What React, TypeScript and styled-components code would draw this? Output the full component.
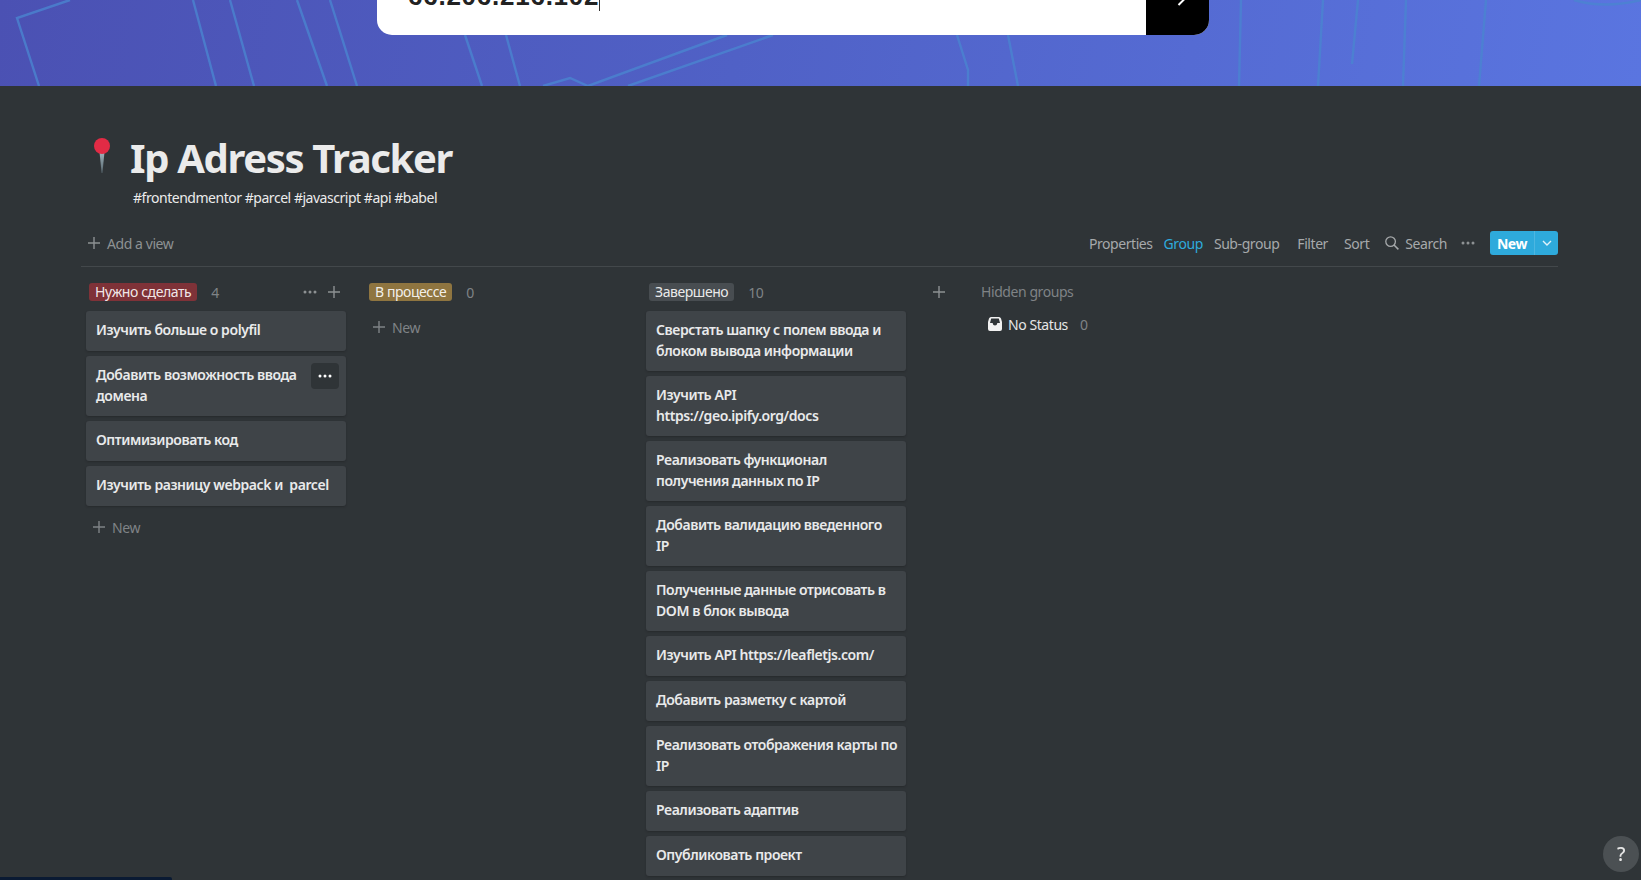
import React from "react";
import styled, { createGlobalStyle } from "styled-components";

const GlobalStyle = createGlobalStyle`
  * { box-sizing: border-box; }
  html, body { margin: 0; height: 100%; background: #2f3437; overflow: hidden; }
  body {
    font-family: "Noto Sans", "Open Sans", sans-serif;
    font-size: 14px;
    letter-spacing: -0.43px;
  }
`;

const BANNER_LINES = [
  "M70 0 L17 18 L39 86",
  "M193 0 L216 86",
  "M230 0 L254 86",
  "M297 0 L327 86",
  "M330 0 L357 86",
  "M465 35 L482 86",
  "M506 35 L520 86",
  "M727 35 L588 86 L570 78 L543 86",
  "M773 35 L628 86",
  "M957 35 L968 70 L968 86",
  "M1008 35 L1018 86",
  "M1241 0 L1239 86",
  "M1323 0 L1318 86",
  "M1358 0 L1352 64",
  "M1406 0 L1403 86",
  "M1486 0 L1479 86",
  "M1574 0 Q1604 9 1641 0",
];

interface TaskItem {
  title: string;
  lines: number;
  menu?: boolean;
}

interface ColumnData {
  name: string;
  tone: "red" | "yellow" | "gray";
  tasks: TaskItem[];
  showActions?: boolean;
  showNew?: boolean;
}

const COLUMNS: ColumnData[] = [
  {
    name: "Нужно сделать",
    tone: "red",
    showActions: true,
    showNew: true,
    tasks: [
      { title: "Изучить больше о polyfil", lines: 1 },
      { title: "Добавить возможность ввода домена", lines: 2, menu: true },
      { title: "Оптимизировать код", lines: 1 },
      { title: "Изучить разницу webpack и  parcel", lines: 1 },
    ],
  },
  { name: "В процессе", tone: "yellow", showNew: true, tasks: [] },
  {
    name: "Завершено",
    tone: "gray",
    tasks: [
      { title: "Сверстать шапку с полем ввода и блоком вывода информации", lines: 2 },
      { title: "Изучить API https://geo.ipify.org/docs", lines: 2 },
      { title: "Реализовать функционал получения данных по IP", lines: 2 },
      { title: "Добавить валидацию введенного\nIP", lines: 2 },
      { title: "Полученные данные отрисовать в DOM в блок вывода", lines: 2 },
      { title: "Изучить API https://leafletjs.com/", lines: 1 },
      { title: "Добавить разметку с картой", lines: 1 },
      { title: "Реализовать отображения карты по IP", lines: 2 },
      { title: "Реализовать адаптив", lines: 1 },
      { title: "Опубликовать проект", lines: 1 },
    ],
  },
];

const COUNTS = [4, 0, 10];

const PlusIcon = ({ size = 12 }: { size?: number }) => (
  <svg width={size} height={size} viewBox="0 0 12 12" fill="none">
    <path d="M6 0 V12 M0 6 H12" stroke="currentColor" strokeWidth="1.4" />
  </svg>
);

const DotsIcon = () => (
  <svg width="14" height="4" viewBox="0 0 14 4" fill="currentColor">
    <circle cx="2" cy="2" r="1.5" />
    <circle cx="7" cy="2" r="1.5" />
    <circle cx="12" cy="2" r="1.5" />
  </svg>
);

const App: React.FC = () => {
  return (
    <>
      <GlobalStyle />
      <Banner>
        <BannerArt viewBox="0 0 1641 86" width="1641" height="86" fill="none">
          {BANNER_LINES.map((d) => (
            <path key={d} d={d} stroke="#4a85d0" strokeWidth="2.4" strokeOpacity="0.8" />
          ))}
        </BannerArt>
        <SearchBox>
          <SearchField>
            <SearchValue>66.206.216.102</SearchValue>
          </SearchField>
          <SearchSubmit>
            <svg width="11" height="18" viewBox="0 0 11 18" fill="none">
              <path d="M1.5 1 L9.5 9 L1.5 17" stroke="#fff" strokeWidth="2" />
            </svg>
          </SearchSubmit>
        </SearchBox>
      </Banner>

      <Content>
        <TitleRow>
          <PinIcon width="16" height="35" viewBox="0 0 16 35">
            <defs>
              <linearGradient id="pinStem" x1="0" y1="0" x2="0" y2="1">
                <stop offset="0" stopColor="#9fb4bd" />
                <stop offset="1" stopColor="#56656d" />
              </linearGradient>
            </defs>
            <path d="M5.5 14 H10.5 L8.4 35 H7.6 Z" fill="url(#pinStem)" />
            <circle cx="8" cy="8" r="8" fill="#e22b45" />
          </PinIcon>
          <Title>Ip Adress Tracker</Title>
        </TitleRow>
        <Tags>#frontendmentor #parcel #javascript #api #babel</Tags>

        <Toolbar>
          <AddView>
            <PlusIcon />
            Add a view
          </AddView>
          <ToolbarRight>
            <ToolItem $gap={11}>Properties</ToolItem>
            <ToolItem $gap={11} $active>Group</ToolItem>
            <ToolItem $gap={18}>Sub-group</ToolItem>
            <ToolItem $gap={16}>Filter</ToolItem>
            <ToolItem $gap={16}>Sort</ToolItem>
            <ToolItem $gap={14}>
              <svg width="14" height="14" viewBox="0 0 14 14" fill="none">
                <circle cx="5.6" cy="5.6" r="4.8" stroke="currentColor" strokeWidth="1.3" />
                <path d="M9 9 L13.4 13.4" stroke="currentColor" strokeWidth="1.5" />
              </svg>
              Search
            </ToolItem>
            <ToolDots $gap={15}>
              <DotsIcon />
            </ToolDots>
            <NewButton>
              <NewLabel>New</NewLabel>
              <NewCaret>
                <svg width="10" height="6" viewBox="0 0 10 6" fill="none">
                  <path d="M1 1 L5 5 L9 1" stroke="#fff" strokeOpacity="0.85" strokeWidth="1.4" />
                </svg>
              </NewCaret>
            </NewButton>
          </ToolbarRight>
        </Toolbar>

        <Board>
          {COLUMNS.map((column, index) => (
            <Column key={column.name}>
              <ColumnHeader>
                <Tag $tone={column.tone}>{column.name}</Tag>
                <Count>{COUNTS[index]}</Count>
                {column.showActions && (
                  <ColumnActions>
                    <DotsIcon />
                    <PlusIcon />
                  </ColumnActions>
                )}
              </ColumnHeader>
              {column.tasks.map((task) => (
                <Card key={task.title} $lines={task.lines}>
                  {task.title}
                  {task.menu && (
                    <CardMenu>
                      <DotsIcon />
                    </CardMenu>
                  )}
                </Card>
              ))}
              {column.showNew && (
                <NewRow>
                  <PlusIcon />
                  New
                </NewRow>
              )}
            </Column>
          ))}
          <AddGroup>
            <PlusIcon />
          </AddGroup>
          <Hidden>
            <HiddenTitle>Hidden groups</HiddenTitle>
            <HiddenRow>
              <svg width="14" height="14" viewBox="0 0 14 14">
                <path
                  fill="#f1f1f1"
                  fillRule="evenodd"
                  d="M3 0 H11 Q12.4 0 13 1.6 L14 5 V12 Q14 14 12 14 H2 Q0 14 0 12 V5 L1 1.6 Q1.6 0 3 0 Z M3.2 1.6 L2 6 H4.6 Q5 8.6 7 8.6 Q9 8.6 9.4 6 H12 L10.8 1.6 Z"
                />
              </svg>
              <HiddenName>No Status</HiddenName>
              <HiddenCount>0</HiddenCount>
            </HiddenRow>
          </Hidden>
        </Board>
      </Content>

      <HelpButton>?</HelpButton>
      <ProgressBar />
    </>
  );
};

export default App;

const Banner = styled.header`
  position: relative;
  height: 86px;
  overflow: hidden;
  background: linear-gradient(100deg, #4b51b3 0%, #5061c6 45%, #5a75e0 100%);
`;

const BannerArt = styled.svg`
  position: absolute;
  top: 0;
  left: 0;
`;

const SearchBox = styled.div`
  position: relative;
  display: flex;
  width: 832px;
  height: 58px;
  margin: -23px 0 0 377px;
  border-radius: 15px;
  overflow: hidden;
  background: #fff;
`;

const SearchField = styled.div`
  flex: 1;
  display: flex;
  align-items: flex-end;
  padding: 0 0 24px 31px;
  font-family: "Liberation Sans", Arial, sans-serif;
  font-size: 26px;
  font-weight: 700;
  line-height: 30px;
  letter-spacing: 0.75px;
  color: #222;
`;

const SearchValue = styled.span`
  border-right: 1px solid #333;
`;

const SearchSubmit = styled.div`
  width: 63px;
  display: flex;
  align-items: flex-end;
  padding: 0 0 29px 31px;
  background: #000;
`;

const Content = styled.main`
  padding: 0 83px 0 81px;
`;

const TitleRow = styled.div`
  display: flex;
  align-items: flex-start;
  height: 62px;
  padding: 52px 0 0 13px;
`;

const PinIcon = styled.svg`
  flex: none;
`;

const Title = styled.h1`
  margin: -8px 0 0 20px;
  font-size: 40px;
  font-weight: 700;
  line-height: 56px;
  letter-spacing: -1.35px;
  color: #ebebeb;
  white-space: nowrap;
`;

const Tags = styled.div`
  margin: 40px 0 0 52px;
  font-size: 14px;
  line-height: 20px;
  letter-spacing: -0.47px;
  color: #ebebeb;
`;

const Toolbar = styled.div`
  display: flex;
  align-items: center;
  justify-content: space-between;
  height: 47px;
  margin-top: 12px;
  border-bottom: 1px solid #43484b;
`;

const AddView = styled.div`
  display: flex;
  align-items: center;
  gap: 7px;
  padding-left: 7px;
  color: #8d9193;
`;

const ToolbarRight = styled.div`
  display: flex;
  align-items: center;
`;

const ToolItem = styled.div<{ $gap: number; $active?: boolean }>`
  display: flex;
  align-items: center;
  gap: 6px;
  margin-right: ${(p) => p.$gap}px;
  color: ${(p) => (p.$active ? "#2eaadc" : "#a6a9ab")};
`;

const ToolDots = styled.div<{ $gap: number }>`
  display: flex;
  margin-right: ${(p) => p.$gap}px;
  color: #8d9193;
`;

const NewButton = styled.div`
  display: flex;
  height: 24px;
  border-radius: 3px;
  overflow: hidden;
  background: #2eaadc;
  color: #fff;
`;

const NewLabel = styled.div`
  width: 44px;
  display: flex;
  align-items: center;
  justify-content: center;
  font-weight: 700;
`;

const NewCaret = styled.div`
  width: 24px;
  display: flex;
  align-items: center;
  justify-content: center;
  border-left: 1px solid rgba(255, 255, 255, 0.15);
`;

const Board = styled.section`
  display: flex;
  gap: 20px;
  padding: 16px 0 0 5px;
`;

const Column = styled.div`
  width: 260px;
  flex: none;
  display: flex;
  flex-direction: column;
`;

const ColumnHeader = styled.div`
  display: flex;
  align-items: center;
  height: 18px;
  margin-bottom: 10px;
  padding-left: 3px;
`;

const TONES = { red: "#7f3238", yellow: "#8f7540", gray: "#484d51" };

const Tag = styled.span<{ $tone: keyof typeof TONES }>`
  height: 18px;
  padding: 0 6px;
  border-radius: 3px;
  background: ${(p) => TONES[p.$tone]};
  color: rgba(255, 255, 255, 0.9);
  font-size: 14px;
  line-height: 18px;
  white-space: nowrap;
`;

const Count = styled.span`
  margin-left: 14px;
  color: #7f8386;
`;

const ColumnActions = styled.div`
  margin-left: auto;
  display: flex;
  align-items: center;
  gap: 11px;
  padding-right: 6px;
  color: #8d9193;
`;

const Card = styled.article<{ $lines: number }>`
  position: relative;
  height: ${(p) => (p.$lines === 1 ? 40 : 60)}px;
  margin-bottom: 5px;
  padding: 8px 7px 0 10px;
  border-radius: 3px;
  background: #3f4448;
  box-shadow: 0 1px 2px rgba(15, 15, 15, 0.25);
  color: #e9eaeb;
  font-weight: 600;
  line-height: 21px;
  white-space: pre-wrap;
`;

const CardMenu = styled.div`
  position: absolute;
  top: 7px;
  right: 7px;
  width: 28px;
  height: 26px;
  display: flex;
  align-items: center;
  justify-content: center;
  border-radius: 4px;
  background: #2f3437;
  color: #fff;
`;

const NewRow = styled.div`
  display: flex;
  align-items: center;
  gap: 7px;
  height: 32px;
  padding-left: 7px;
  color: #7f8386;
`;

const AddGroup = styled.div`
  width: 12px;
  height: 18px;
  display: flex;
  align-items: center;
  margin-left: 7px;
  color: #8d9193;
`;

const Hidden = styled.div`
  margin-left: 16px;
`;

const HiddenTitle = styled.div`
  height: 18px;
  line-height: 18px;
  color: #7f8386;
`;

const HiddenRow = styled.div`
  display: flex;
  align-items: center;
  height: 20px;
  margin-top: 13px;
  padding-left: 7px;
`;

const HiddenName = styled.span`
  margin-left: 6px;
  color: #e6e6e6;
`;

const HiddenCount = styled.span`
  margin-left: 12px;
  color: #7f8386;
`;

const HelpButton = styled.div`
  position: fixed;
  right: 2px;
  bottom: 8px;
  width: 36px;
  height: 36px;
  display: flex;
  align-items: center;
  justify-content: center;
  border-radius: 50%;
  background: #4b5053;
  color: #e6e6e6;
  font-size: 19px;
  font-weight: 500;
`;

const ProgressBar = styled.div`
  position: fixed;
  left: 0;
  bottom: 0;
  width: 172px;
  height: 3px;
  border-top-right-radius: 2px;
  background: #0a1a33;
`;
